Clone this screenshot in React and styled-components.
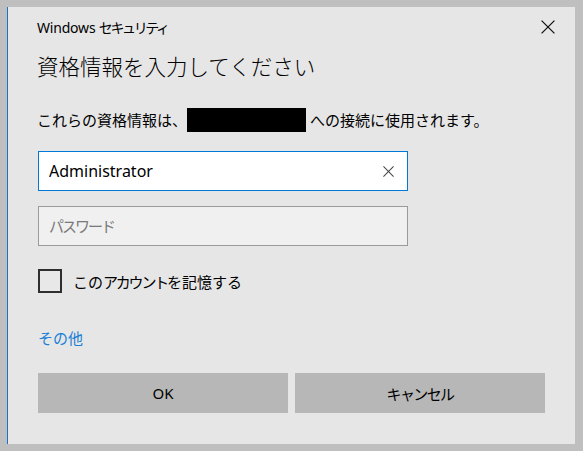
import React from 'react';
import styled, { createGlobalStyle } from 'styled-components';

const GlobalStyle = createGlobalStyle`
  html, body {
    margin: 0;
    padding: 0;
    background: #bfbfbf;
  }
  body {
    font-family: "Noto Sans", "Noto Sans CJK JP", sans-serif;
    color: #000;
  }
`;

const Window = styled.div`
  box-sizing: border-box;
  margin: 7px 0 0 7px;
  width: 568px;
  height: 437px;
  background: #e6e6e6;
  border-left: 1px solid #1a73c9;
  display: flex;
  flex-direction: column;
`;

const TitleBar = styled.div`
  height: 40px;
  padding: 0 20px 0 29px;
  display: flex;
  align-items: center;
  justify-content: space-between;
  font-size: 14px;
  letter-spacing: -0.2px;
`;

// katakana in the system font is set tighter than Noto's full-width glyphs
const Kana = styled.span`
  letter-spacing: ${p => p.$track || -2}px;
`;

const CloseButton = styled.button`
  width: 14px;
  height: 14px;
  padding: 0;
  border: none;
  background: none;
  display: flex;
  align-items: center;
  justify-content: center;
  cursor: pointer;
`;

const Body = styled.div`
  padding: 0 30px 0 29px;
  display: flex;
  flex-direction: column;
`;

const Heading = styled.h1`
  margin: 4px 0 0;
  height: 30px;
  line-height: 30px;
  font-size: 21.5px;
  font-weight: 300;
  font-family: "Noto Sans CJK JP", sans-serif;
`;

const Message = styled.p`
  margin: 28px 0 0;
  height: 22px;
  line-height: 22px;
  font-size: 15px;
  display: flex;
  align-items: center;
  font-family: "Noto Sans CJK JP", sans-serif;
`;

const Redacted = styled.span`
  display: inline-block;
  width: 119px;
  height: 24px;
  background: #000;
  margin: 0 4px 0 0;
`;

const Field = styled.div`
  box-sizing: border-box;
  margin-top: ${p => p.$gap}px;
  margin-left: 1px;
  width: 370px;
  height: 40px;
  border: 1px solid ${p => (p.$focused ? '#0078d7' : '#9a9a9a')};
  background: ${p => (p.$focused ? '#ffffff' : '#f0f0f0')};
  display: flex;
  align-items: center;
  padding: 0 13px 0 10px;
`;

const FieldInput = styled.input`
  flex: 1;
  border: none;
  outline: none;
  background: transparent;
  padding: 0;
  font-size: 16px;
  font-family: "Noto Sans", "Noto Sans CJK JP", sans-serif;
  color: #000;
  &::placeholder {
    color: #7a7a7a;
    font-family: "Noto Sans CJK JP", sans-serif;
    font-size: 15px;
    letter-spacing: -2px;
  }
`;

const ClearButton = styled.span`
  display: flex;
  width: 12px;
  height: 12px;
  align-items: center;
  justify-content: center;
`;

const CheckRow = styled.label`
  margin-top: 23px;
  margin-left: 1px;
  height: 24px;
  display: flex;
  align-items: center;
  gap: 11px;
  font-size: 15px;
  font-family: "Noto Sans CJK JP", sans-serif;
`;

const CheckBox = styled.span`
  box-sizing: border-box;
  width: 24px;
  height: 24px;
  border: 2px solid #2e2e2e;
  background: #e8e8e8;
`;

const MoreLink = styled.a`
  margin-top: 34px;
  margin-left: 1px;
  height: 22px;
  line-height: 22px;
  font-size: 15px;
  color: #1a7fd6;
  text-decoration: none;
  font-family: "Noto Sans CJK JP", sans-serif;
  align-self: flex-start;
`;

const ButtonRow = styled.div`
  margin-top: 24px;
  margin-left: 1px;
  display: grid;
  grid-template-columns: 250px 250px;
  gap: 7px;
`;

const DialogButton = styled.button`
  height: 40px;
  border: none;
  background: #b7b7b7;
  font-size: 15px;
  font-family: "Noto Sans", "Noto Sans CJK JP", sans-serif;
  color: #000;
  cursor: pointer;
`;

const Cross = ({ size, stroke }) => (
  <svg width={size} height={size} viewBox="0 0 12 12">
    <path d="M0.5 0.5 L11.5 11.5 M11.5 0.5 L0.5 11.5" stroke={stroke} strokeWidth="1.1" fill="none" />
  </svg>
);

export default function App() {
  const [user, setUser] = React.useState('Administrator');

  return (
    <>
      <GlobalStyle />
      <Window>
        <TitleBar>
          <span>
            Windows <Kana $track={-2.4}>セキュリティ</Kana>
          </span>
          <CloseButton aria-label="閉じる">
            <Cross size={14} stroke="#111" />
          </CloseButton>
        </TitleBar>
        <Body>
          <Heading>資格情報を入力してください</Heading>
          <Message>
            これらの資格情報は、<Redacted />への接続に使用されます。
          </Message>
          <Field $focused $gap={20}>
            <FieldInput value={user} onChange={e => setUser(e.target.value)} />
            <ClearButton>
              <Cross size={11} stroke="#444" />
            </ClearButton>
          </Field>
          <Field $gap={15}>
            <FieldInput type="password" placeholder="パスワード" />
          </Field>
          <CheckRow>
            <CheckBox />
            <span>
              この<Kana $track={-2.2}>アカウント</Kana>を記憶する
            </span>
          </CheckRow>
          <MoreLink href="#">その他</MoreLink>
          <ButtonRow>
            <DialogButton>OK</DialogButton>
            <DialogButton>
              <Kana $track={-1.6}>キャンセル</Kana>
            </DialogButton>
          </ButtonRow>
        </Body>
      </Window>
    </>
  );
}
